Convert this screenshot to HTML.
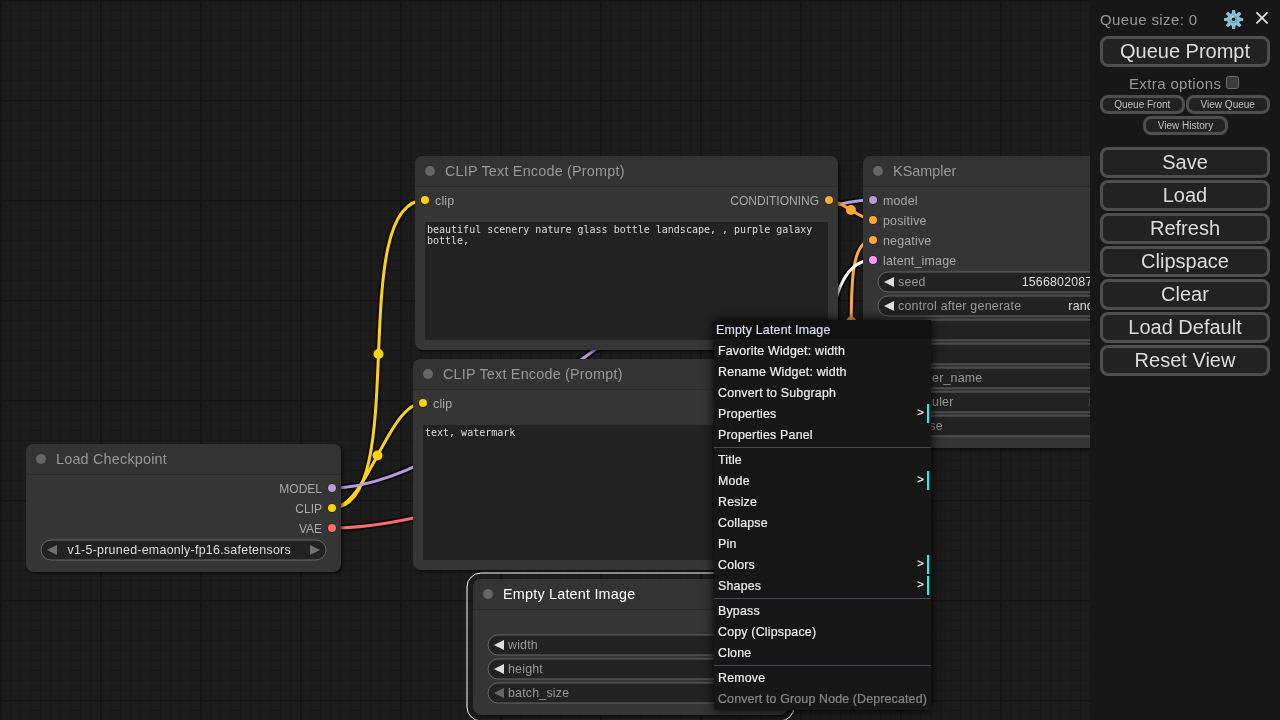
<!DOCTYPE html>
<html lang="en">
<head>
<meta charset="utf-8">
<title>ComfyUI</title>
<style>
html,body{margin:0;padding:0;width:1280px;height:720px;overflow:hidden;background:#1c1c1c;}
body{font-family:"Liberation Sans",sans-serif;position:relative;}
#bg{position:absolute;left:0;top:0;width:1280px;height:720px;background-color:#1c1c1c;
 background-image:
  linear-gradient(to right,#141414 2px,transparent 2px),
  linear-gradient(to bottom,#141414 1px,#181818 1px,#181818 2px,transparent 2px),
  linear-gradient(to right,#181818 1px,transparent 1px),
  linear-gradient(to bottom,#181818 1px,transparent 1px);
 background-size:100px 100px,100px 100px,10px 10px,10px 10px;}
#all{position:absolute;left:0;top:0;width:1280px;height:720px;will-change:transform;}
#links{position:absolute;left:0;top:0;}
.node{position:absolute;border-radius:8px;background:#353535;box-shadow:2px 2px 3px rgba(0,0,0,.5);color:#aaa;font-size:12px;}
.node .title{position:absolute;left:0;top:0;right:0;height:30px;background:#333;border-radius:8px 8px 0 0;box-shadow:0 1px 0 #2b2b2b;}
.node .title .dot{position:absolute;left:10px;top:10px;width:10px;height:10px;border-radius:50%;background:#666;}
.node .title .tt{position:absolute;left:30px;top:0;line-height:30px;font-size:14.4px;letter-spacing:.2px;color:#999;white-space:nowrap;}
.node.sel .title .tt{color:#fff;}
.slot{position:absolute;line-height:20px;height:20px;margin-top:1px;font-size:12.4px;letter-spacing:.2px;color:#aaa;white-space:nowrap;}
.slot.in{left:20px;}
.slot.out{right:19px;text-align:right;font-size:12px;letter-spacing:0;}
.sd{position:absolute;width:8px;height:8px;border-radius:50%;box-shadow:0 0 0 .5px rgba(0,0,0,.6);}
.w{position:absolute;left:14px;right:14px;height:22px;margin-top:-1px;box-sizing:border-box;border:2px solid transparent;font-size:12.4px;letter-spacing:.2px;line-height:20.6px;white-space:nowrap;}
.w svg{position:absolute;left:-2px;top:-2px;width:calc(100% + 4px);height:22px;overflow:visible;}
.w svg rect{x:1px;y:1px;width:calc(100% - 2px);height:20px;rx:10px;ry:10px;fill:#222;stroke:#666;stroke-width:1px;}
.w .l{position:absolute;left:19px;top:-1px;color:#999;}
.w .v{position:absolute;right:34px;top:-1px;color:#ddd;}
.w .al{position:absolute;left:5px;top:4px;width:0;height:0;border-top:5px solid transparent;border-bottom:5px solid transparent;border-right:10px solid #ddd;}
.w .ar{position:absolute;right:5px;top:4px;width:0;height:0;border-top:5px solid transparent;border-bottom:5px solid transparent;border-left:10px solid #ddd;}
.w .dis{border-right-color:#666;}
.ta{position:absolute;background:#222;color:#ddd;font-family:"DejaVu Sans Mono","Liberation Mono",monospace;font-size:10px;line-height:11px;padding:2px;box-sizing:border-box;white-space:pre-wrap;overflow:hidden;}

#ctx{position:absolute;left:714px;top:320px;width:217px;background:#171718;box-shadow:0 0 10px #000;font-size:12.4px;letter-spacing:.2px;color:#eee;line-height:15px;-webkit-text-stroke:.2px #eee;}
#ctx .ttl{background:#111;color:#dde;-webkit-text-stroke:.2px #dde;padding:3px 2px 1px 2px;margin:0;}
#ctx .e{margin:2px;padding:3px 2px 1px 2px;position:relative;white-space:nowrap;}
#ctx .e.sub{border-right:2px solid cyan;}
#ctx .e.sub:after{content:">";position:absolute;right:3px;top:1px;font-size:11.5px;letter-spacing:0}
#ctx .sep{height:0;border-top:1px solid #494954;margin:3px 0 2px 0;}
#ctx .dis{opacity:.5;}

#menu{position:absolute;left:1090px;top:0;width:190px;height:720px;background:#171718;color:#999;font-size:16px;}
#menu button{position:absolute;box-sizing:border-box;margin:0;padding:0;font-family:"Liberation Sans",sans-serif;color:#ddd;background:#222;border:3px solid #4e4e4e;border-radius:8px;font-size:20px;text-align:center;}
#menu .big{left:10px;width:170px;height:31px;line-height:25px;}
#menu .sm{font-size:10px;height:19px;line-height:13px;color:#c2c2c2;}
</style>
</head>
<body>
<div id="bg"></div>
<div id="all">
<svg id="links" width="1280" height="720" viewBox="0 0 1280 720">
<path d="M332.00 508.00C412.43 508.00 344.57 200.00 425.00 200.00" stroke="rgba(0,0,0,0.5)" stroke-width="7" fill="none"/>
<path d="M332.00 508.00C366.74 508.00 388.26 403.00 423.00 403.00" stroke="rgba(0,0,0,0.5)" stroke-width="7" fill="none"/>
<path d="M332.00 488.00C485.22 488.00 719.78 200.00 873.00 200.00" stroke="rgba(0,0,0,0.5)" stroke-width="7" fill="none"/>
<path d="M332.00 528.00C566.57 528.00 984.43 222.00 1219.00 222.00" stroke="rgba(0,0,0,0.5)" stroke-width="7" fill="none"/>
<path d="M828.85 200.00C840.97 200.00 860.88 220.00 873.00 220.00" stroke="rgba(0,0,0,0.5)" stroke-width="7" fill="none"/>
<path d="M829.28 403.00C871.47 403.00 830.81 240.00 873.00 240.00" stroke="rgba(0,0,0,0.5)" stroke-width="7" fill="none"/>
<path d="M779.00 623.00C872.74 623.00 779.26 260.00 873.00 260.00" stroke="rgba(0,0,0,0.5)" stroke-width="7" fill="none"/>
<path d="M1169.00 200.00C1181.51 200.00 1206.49 202.00 1219.00 202.00" stroke="rgba(0,0,0,0.5)" stroke-width="7" fill="none"/>
<path d="M332.00 508.00C412.43 508.00 344.57 200.00 425.00 200.00" stroke="#FFD500" stroke-width="3" fill="none"/>
<circle cx="378.50" cy="354.00" r="5" fill="#FFD500"/>
<path d="M332.00 508.00C366.74 508.00 388.26 403.00 423.00 403.00" stroke="#FFD500" stroke-width="3" fill="none"/>
<circle cx="377.50" cy="455.50" r="5" fill="#FFD500"/>
<path d="M332.00 488.00C485.22 488.00 719.78 200.00 873.00 200.00" stroke="#B39DDB" stroke-width="3" fill="none"/>
<circle cx="602.50" cy="344.00" r="5" fill="#B39DDB"/>
<path d="M332.00 528.00C566.57 528.00 984.43 222.00 1219.00 222.00" stroke="#FF6E6E" stroke-width="3" fill="none"/>
<circle cx="775.50" cy="375.00" r="5" fill="#FF6E6E"/>
<path d="M828.85 200.00C840.97 200.00 860.88 220.00 873.00 220.00" stroke="#FFA931" stroke-width="3" fill="none"/>
<circle cx="850.92" cy="210.00" r="5" fill="#FFA931"/>
<path d="M829.28 403.00C871.47 403.00 830.81 240.00 873.00 240.00" stroke="#FFA931" stroke-width="3" fill="none"/>
<circle cx="851.14" cy="321.50" r="5" fill="#FFA931"/>
<path d="M779.00 623.00C872.74 623.00 779.26 260.00 873.00 260.00" stroke="#FFFFFF" stroke-width="3" fill="none"/>
<circle cx="826.00" cy="441.50" r="5" fill="#FFFFFF"/>
<path d="M1169.00 200.00C1181.51 200.00 1206.49 202.00 1219.00 202.00" stroke="#FF9CF9" stroke-width="3" fill="none"/>
<circle cx="1194.00" cy="201.00" r="5" fill="#FF9CF9"/>
</svg>

<!-- CLIP Text Encode (positive) -->
<div class="node" style="left:415px;top:156px;width:423px;height:194px;">
  <div class="title"><span class="dot"></span><span class="tt">CLIP Text Encode (Prompt)</span></div>
  <span class="sd" style="left:6px;top:40px;background:#FFD500"></span><span class="slot in" style="top:34px">clip</span>
  <span class="slot out" style="top:34px">CONDITIONING</span><span class="sd" style="left:410px;top:40px;background:#FFA931"></span>
  <div class="ta" style="left:10px;top:66px;width:403px;height:118px;">beautiful scenery nature glass bottle landscape, , purple galaxy bottle,</div>
</div>

<!-- CLIP Text Encode (negative) -->
<div class="node" style="left:413px;top:359px;width:425px;height:211px;">
  <div class="title"><span class="dot"></span><span class="tt">CLIP Text Encode (Prompt)</span></div>
  <span class="sd" style="left:6px;top:40px;background:#FFD500"></span><span class="slot in" style="top:34px">clip</span>
  <span class="slot out" style="top:34px">CONDITIONING</span><span class="sd" style="left:412px;top:40px;background:#FFA931"></span>
  <div class="ta" style="left:10px;top:66px;width:405px;height:135px;">text, watermark</div>
</div>

<!-- KSampler -->
<div class="node" style="left:863px;top:156px;width:315px;height:292px;">
  <div class="title"><span class="dot"></span><span class="tt" style="letter-spacing:.03px">KSampler</span></div>
  <span class="sd" style="left:6px;top:40px;background:#B39DDB"></span><span class="slot in" style="top:34px">model</span>
  <span class="sd" style="left:6px;top:60px;background:#FFA931"></span><span class="slot in" style="top:54px">positive</span>
  <span class="sd" style="left:6px;top:80px;background:#FFA931"></span><span class="slot in" style="top:74px">negative</span>
  <span class="sd" style="left:6px;top:100px;background:#FF9CF9"></span><span class="slot in" style="top:94px">latent_image</span>
  <span class="slot out" style="top:34px">LATENT</span><span class="sd" style="left:302px;top:40px;background:#FF9CF9"></span>
  <div class="w" style="top:116px"><svg><rect/></svg><i class="al"></i><span class="l">seed</span><span class="v">156680208700286</span><i class="ar"></i></div>
  <div class="w" style="top:140px"><svg><rect/></svg><i class="al"></i><span class="l" style="letter-spacing:.25px">control after generate</span><span class="v">randomize</span><i class="ar"></i></div>
  <div class="w" style="top:164px"><svg><rect/></svg><i class="al"></i><span class="l">steps</span><span class="v">20</span><i class="ar"></i></div>
  <div class="w" style="top:188px"><svg><rect/></svg><i class="al"></i><span class="l">cfg</span><span class="v">8.0</span><i class="ar"></i></div>
  <div class="w" style="top:212px"><svg><rect/></svg><i class="al"></i><span class="l">sampler_name</span><span class="v">euler</span><i class="ar"></i></div>
  <div class="w" style="top:236px"><svg><rect/></svg><i class="al"></i><span class="l">scheduler</span><span class="v">normal</span><i class="ar"></i></div>
  <div class="w" style="top:260px"><svg><rect/></svg><i class="al"></i><span class="l">denoise</span><span class="v">1.00</span><i class="ar"></i></div>
</div>

<!-- Load Checkpoint -->
<div class="node" style="left:26px;top:444px;width:315px;height:128px;">
  <div class="title"><span class="dot"></span><span class="tt">Load Checkpoint</span></div>
  <span class="slot out" style="top:34px">MODEL</span><span class="sd" style="left:302px;top:40px;background:#B39DDB"></span>
  <span class="slot out" style="top:54px">CLIP</span><span class="sd" style="left:302px;top:60px;background:#FFD500"></span>
  <span class="slot out" style="top:74px">VAE</span><span class="sd" style="left:302px;top:80px;background:#FF6E6E"></span>
  <div class="w" style="top:96px"><svg><rect/></svg><i class="al" style="border-right-color:#707070"></i><span class="v" style="letter-spacing:.28px">v1-5-pruned-emaonly-fp16.safetensors</span><i class="ar" style="border-left-color:#707070"></i></div>
</div>

<!-- Empty Latent Image (selected) -->
<svg style="position:absolute;left:0;top:0" width="1280" height="720" viewBox="0 0 1280 720"><rect x="467" y="573" width="327" height="148" rx="14" ry="14" fill="none" stroke="#fff" stroke-width="1"/></svg>
<div class="node sel" style="left:473px;top:579px;width:315px;height:136px;">
  <div class="title"><span class="dot"></span><span class="tt">Empty Latent Image</span></div>
  <span class="slot out" style="top:34px">LATENT</span><span class="sd" style="left:302px;top:40px;background:#FF9CF9"></span>
  <div class="w" style="top:56px"><svg><rect/></svg><i class="al"></i><span class="l">width</span><span class="v">512</span><i class="ar"></i></div>
  <div class="w" style="top:80px"><svg><rect/></svg><i class="al"></i><span class="l">height</span><span class="v">512</span><i class="ar"></i></div>
  <div class="w" style="top:104px"><svg><rect/></svg><i class="al dis"></i><span class="l">batch_size</span><span class="v">1</span><i class="ar"></i></div>
</div>

<!-- Context menu -->
<div id="ctx">
  <div class="ttl">Empty Latent Image</div>
  <div class="e">Favorite Widget: width</div>
  <div class="e">Rename Widget: width</div>
  <div class="e">Convert to Subgraph</div>
  <div class="e sub">Properties</div>
  <div class="e">Properties Panel</div>
  <div class="sep"></div>
  <div class="e">Title</div>
  <div class="e sub">Mode</div>
  <div class="e">Resize</div>
  <div class="e">Collapse</div>
  <div class="e">Pin</div>
  <div class="e sub">Colors</div>
  <div class="e sub">Shapes</div>
  <div class="sep"></div>
  <div class="e">Bypass</div>
  <div class="e">Copy (Clipspace)</div>
  <div class="e">Clone</div>
  <div class="sep"></div>
  <div class="e">Remove</div>
  <div class="e dis" style="letter-spacing:.15px">Convert to Group Node (Deprecated)</div>
</div>

<!-- Side menu -->
<div id="menu">
  <span style="position:absolute;left:10px;top:11px;line-height:18px;font-size:15px;letter-spacing:.38px">Queue size: 0</span>
  <svg style="position:absolute;left:132px;top:8px" width="22" height="22" viewBox="-11.74 -11.6 22.26 22.26">
    <g fill="#8abed4">
      <circle r="6.5"/>
      <path d="M-1.9 -5.5L-1.6 -9.3Q-1.5 -9.7 -1.1 -9.7L1.1 -9.7Q1.5 -9.7 1.6 -9.3L1.9 -5.5ZM-1.9 5.5L-1.6 9.3Q-1.5 9.7 -1.1 9.7L1.1 9.7Q1.5 9.7 1.6 9.3L1.9 5.5Z"/><path d="M-1.9 -5.5L-1.6 -9.3Q-1.5 -9.7 -1.1 -9.7L1.1 -9.7Q1.5 -9.7 1.6 -9.3L1.9 -5.5ZM-1.9 5.5L-1.6 9.3Q-1.5 9.7 -1.1 9.7L1.1 9.7Q1.5 9.7 1.6 9.3L1.9 5.5Z" transform="rotate(45)"/><path d="M-1.9 -5.5L-1.6 -9.3Q-1.5 -9.7 -1.1 -9.7L1.1 -9.7Q1.5 -9.7 1.6 -9.3L1.9 -5.5ZM-1.9 5.5L-1.6 9.3Q-1.5 9.7 -1.1 9.7L1.1 9.7Q1.5 9.7 1.6 9.3L1.9 5.5Z" transform="rotate(90)"/><path d="M-1.9 -5.5L-1.6 -9.3Q-1.5 -9.7 -1.1 -9.7L1.1 -9.7Q1.5 -9.7 1.6 -9.3L1.9 -5.5ZM-1.9 5.5L-1.6 9.3Q-1.5 9.7 -1.1 9.7L1.1 9.7Q1.5 9.7 1.6 9.3L1.9 5.5Z" transform="rotate(135)"/>
    </g>
    <circle r="3.3" fill="none" stroke="#62a9c4" stroke-width="1.2"/>
    <path d="M-3.2 -0.6A3.3 3.3 0 0 1 0.6 -3.2" fill="none" stroke="#c4e2ee" stroke-width="1"/>
    <circle r="1.7" fill="#0c0c0d"/>
  </svg>
  <svg style="position:absolute;left:165px;top:11px" width="14" height="14" viewBox="0 0 14 14"><path d="M2 1.8L12 11.8M12 1.8L2 11.8" stroke="#dedede" stroke-width="1.9" stroke-linecap="round" fill="none"/></svg>
  <button class="big" style="top:36px">Queue Prompt</button>
  <span style="position:absolute;left:39px;top:75px;line-height:18px;font-size:15px;letter-spacing:.37px">Extra options</span>
  <span style="position:absolute;left:136px;top:76px;width:13px;height:13px;box-sizing:border-box;background:#3b3b3b;border:1px solid #6b6b6b;border-radius:2.5px;"></span>
  <button class="sm" style="left:10px;top:95px;width:84.5px">Queue Front</button>
  <button class="sm" style="left:95.5px;top:95px;width:84.5px">View Queue</button>
  <button class="sm" style="left:53px;top:116px;width:85px">View History</button>
  <button class="big" style="top:147px">Save</button>
  <button class="big" style="top:180px">Load</button>
  <button class="big" style="top:213px">Refresh</button>
  <button class="big" style="top:246px">Clipspace</button>
  <button class="big" style="top:279px">Clear</button>
  <button class="big" style="top:312px">Load Default</button>
  <button class="big" style="top:345px">Reset View</button>
</div>
</div>
</body>
</html>
